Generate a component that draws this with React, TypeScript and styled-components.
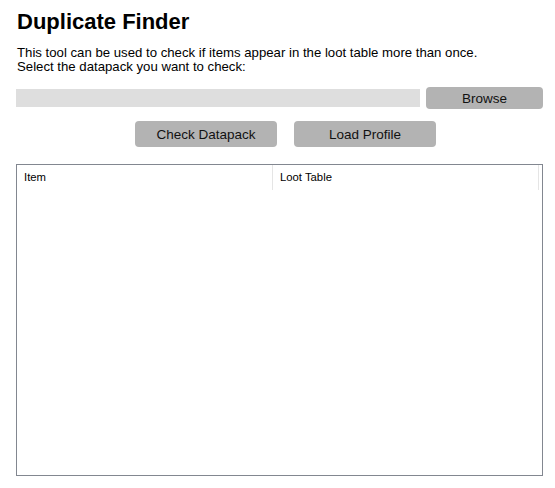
import styled, { createGlobalStyle } from 'styled-components';

const GlobalStyle = createGlobalStyle`
  html, body {
    margin: 0;
    padding: 0;
    background: #ffffff;
  }
  body {
    font-family: 'Liberation Sans', Arial, sans-serif;
    color: #000000;
  }
`;

const Page = styled.div`
  width: 555px;
  height: 488px;
  box-sizing: border-box;
  padding: 11px 12px 0 16px;
  display: flex;
  flex-direction: column;
`;

const Title = styled.h1`
  margin: 0 0 0 1px;
  font-size: 22px;
  line-height: 22px;
  font-weight: bold;
`;

const Description = styled.p`
  margin: 13px 0 0 1px;
  font-size: 13.2px;
  line-height: 14px;
`;

const PathRow = styled.div`
  margin-top: 13px;
  display: flex;
  align-items: center;
  gap: 6px;
`;

const PathInput = styled.div`
  flex: 1;
  height: 18px;
  background: #dedede;
`;

const GreyButton = styled.button<{ $width: number }>`
  width: ${(p) => p.$width}px;
  height: ${(p) => (p.$width > 130 ? 26 : 22)}px;
  padding: 0;
  border: none;
  border-radius: 4px;
  background: #b3b3b3;
  font-family: 'Liberation Sans', Arial, sans-serif;
  font-size: 13.5px;
  color: #111111;
  cursor: pointer;
`;

const ActionRow = styled.div`
  margin-top: 12px;
  display: flex;
  justify-content: center;
  gap: 17px;
  padding-left: 12px;
`;

const TableBox = styled.div`
  margin-top: 17px;
  height: 312px;
  box-sizing: border-box;
  border: 1px solid #828790;
  background: #ffffff;
`;

const HeaderRow = styled.div`
  display: grid;
  grid-template-columns: 256px 266px 1fr;
  height: 24px;
`;

const HeaderCell = styled.div<{ $divider?: boolean }>`
  padding-left: 7px;
  font-size: 11.3px;
  line-height: 25px;
  border-right: ${(p) => (p.$divider ? '1px solid #e5e5e5' : 'none')};
`;

export default function App() {
  return (
    <>
      <GlobalStyle />
      <Page>
        <Title>Duplicate Finder</Title>
        <Description>
          This tool can be used to check if items appear in the loot table more than once.
          <br />
          Select the datapack you want to check:
        </Description>
        <PathRow>
          <PathInput />
          <GreyButton $width={117}>Browse</GreyButton>
        </PathRow>
        <ActionRow>
          <GreyButton $width={142}>Check Datapack</GreyButton>
          <GreyButton $width={142}>Load Profile</GreyButton>
        </ActionRow>
        <TableBox>
          <HeaderRow>
            <HeaderCell $divider>Item</HeaderCell>
            <HeaderCell $divider>Loot Table</HeaderCell>
            <HeaderCell />
          </HeaderRow>
        </TableBox>
      </Page>
    </>
  );
}
